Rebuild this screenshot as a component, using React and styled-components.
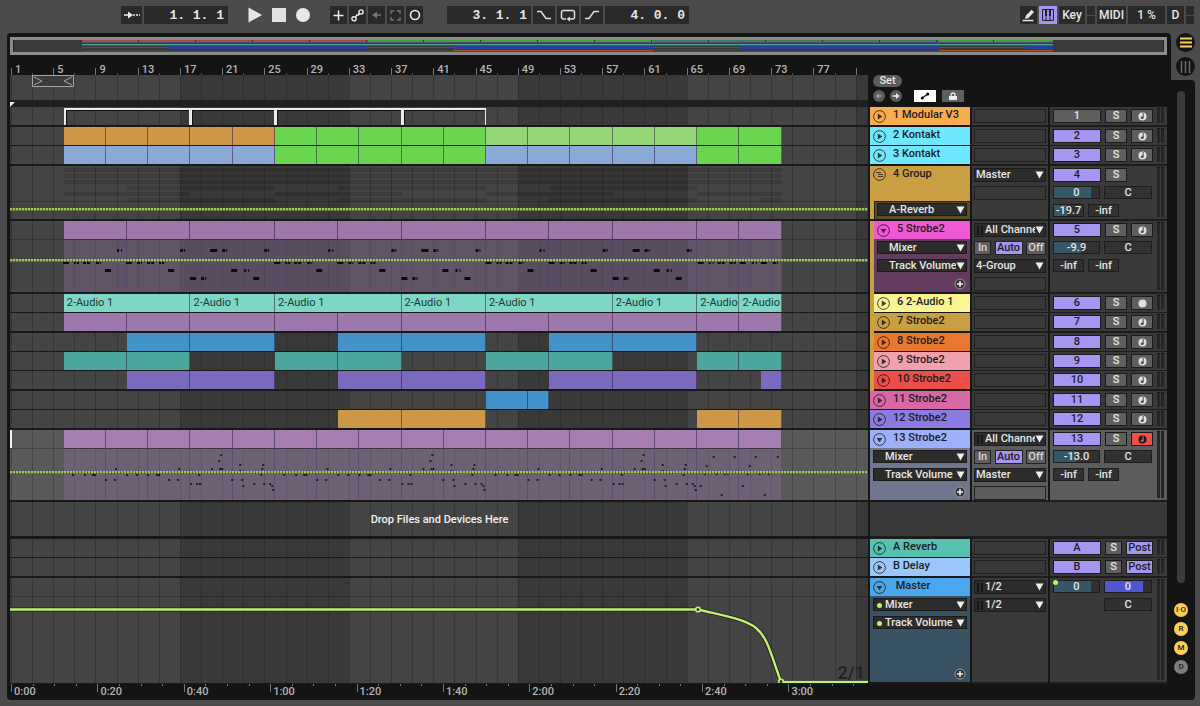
import React, { useState } from 'react';
import styled, { createGlobalStyle, css } from 'styled-components';

// width of n bars, relative to the visible part of the timeline
const bars = (n) => `${(n * 1.232).toFixed(3)}%`;

const COLORS = {
  orange: '#cd9748',
  green: '#69d551',
  lime: '#94d678',
  sky: '#8aaad5',
  purple: '#9d78ac',
  lilac: '#a47eb3',
  mint: '#7dd6c6',
  blue: '#4391c9',
  teal: '#4ba69b',
  violet: '#7b69bd',
  gold: '#c99f43',
  accent: '#a796f1',
  automation: '#bdf567',
};

const GlobalStyle = createGlobalStyle`
  * {
    box-sizing: border-box;
  }
  body {
    margin: 0;
    background: #4b4b4b;
    font-family: Roboto, "Liberation Sans", sans-serif;
    font-size: 11px;
    font-weight: 500;
    color: #e6e6e6;
  }
  button, input, select {
    font: inherit;
    color: inherit;
    margin: 0;
    padding: 0;
    border: 0;
    border-radius: 0;
  }
`;

const Page = styled.div`
  min-height: 100vh;
  display: flex;
  flex-direction: column;
  padding: 0 5px 6px 7px;
`;

/* ---------- toolbar ---------- */

const Toolbar = styled.header`
  display: flex;
  align-items: flex-start;
  height: 33px;
  padding: 6px 1px 0 114px;
`;

const ToolGroup = styled.div`
  display: flex;
  align-items: center;
  gap: 2px;
  margin-right: ${(props) => props.$after || 0}px;
  margin-left: ${(props) => (props.$end ? 'auto' : 0)};
`;

const ToolButton = styled.button`
  display: flex;
  align-items: center;
  justify-content: center;
  width: ${(props) => props.$w || 17}px;
  height: 18px;
  font-size: 12px;
  background: ${(props) => (props.$on ? COLORS.accent : '#2a2a2a')};
  color: ${(props) => (props.$on ? '#222' : '#e6e6e6')};
`;

const PlainButton = styled.button`
  display: flex;
  align-items: center;
  justify-content: center;
  width: 22px;
  height: 18px;
  background: transparent;
`;

const Position = styled.input`
  width: 84px;
  height: 18px;
  padding-right: 4px;
  background: #2a2a2a;
  text-align: right;
  font-family: "Liberation Mono", monospace;
  font-size: 13px;
  font-weight: 700;
`;

const Lights = styled.span`
  display: grid;
  grid-template-rows: 1fr 1fr;
  gap: 1px;
  width: 8px;
  height: 18px;

  i {
    background: #2a2a2a;
  }
`;

/* ---------- frame ---------- */

const Frame = styled.div`
  flex: 1;
  display: grid;
  grid-template-columns: minmax(0, 1fr) 24px;
`;

const Main = styled.main`
  padding: 4px 4px 0 3px;
  background: #141414;
  border-radius: 4px 4px 0 4px;
`;

const Side = styled.aside`
  display: flex;
  flex-direction: column;
`;

const ViewTabs = styled.div`
  display: flex;
  flex-direction: column;
  align-items: flex-end;
  gap: 5px;
  height: 47px;
`;

const ViewTab = styled.button`
  flex: none;
  display: flex;
  align-items: center;
  justify-content: center;
  width: 19px;
  height: 19px;
  border-radius: 50%;
  background: #141414;
`;

const SideBody = styled.div`
  flex: 1;
  display: flex;
  flex-direction: column;
  align-items: center;
  gap: 5px;
  padding: 11px 4px 26px 0;
  background: #141414;
  border-radius: 0 4px 4px 0;
`;

const ScrollThumb = styled.div`
  flex: 1;
  width: 8px;
  margin-bottom: 15px;
  border-radius: 4px;
  background: #3b3b3b;
`;

const RoundToggle = styled.button`
  width: 14px;
  height: 14px;
  border-radius: 50%;
  background: ${(props) => (props.$on ? '#fbcf57' : '#7d7d7d')};
  color: #222;
  font-size: 8px;
  line-height: 14px;
`;

const Overview = styled.div`
  height: 18px;
  border: 3px solid #8b8b8b;
  border-width: 3px 3px;
  background: #3a3a3a;

  svg {
    display: block;
    width: 100%;
    height: 12px;
  }
`;

/* ---------- rulers ---------- */

const columns = css`
  display: grid;
  grid-template-columns: minmax(0, 1fr) 100px 76px 117px;
  column-gap: 2px;
`;

const gridLines = css`
  padding-left: 1px;
  background-image:
    repeating-linear-gradient(90deg, rgba(0, 0, 0, 0.2) 0 1px, transparent 1px ${bars(2)}),
    repeating-linear-gradient(90deg, transparent 0 ${bars(16)}, rgba(0, 0, 0, 0.17) ${bars(16)} ${bars(32)});
  background-origin: content-box;
`;

const Head = styled.div`
  ${columns}
`;

const BarRuler = styled.div`
  display: flex;
  height: 20px;
  padding-left: 1px;
  overflow: hidden;
  background-image:
    repeating-linear-gradient(90deg, #777 0 1px, transparent 1px ${bars(4)}),
    repeating-linear-gradient(90deg, #555 0 1px, transparent 1px ${bars(2)});
  background-origin: content-box;
  background-clip: content-box;
  background-repeat: no-repeat;
  background-size: 100% 7px, 100% 2px;
  background-position: 0 100%;
`;

const BarLabel = styled.span`
  flex: 0 0 ${bars(4)};
  padding-left: 4px;
  line-height: 30px;
  color: #b4b4b4;
`;

const Scrub = styled.div`
  height: 25px;
  background-color: #444;
  ${gridLines}
`;

const Brace = styled.div`
  display: flex;
  justify-content: space-between;
  align-items: center;
  width: ${bars(4)};
  height: 12px;
  margin-left: ${bars(2)};
  border: 1px solid #a5a5a5;
  background: #3c3c3c;
`;

const CueBand = styled.div`
  height: 7px;
  background: #1f1f1f;

  svg {
    display: block;
  }
`;

const HeadTools = styled.div`
  display: flex;
  flex-direction: column;
  align-items: flex-start;
  gap: 3px;
  padding: 20px 0 0 3px;
`;

const SetButton = styled.button`
  width: 29px;
  height: 12px;
  border-radius: 6px;
  background: #5b5b5b;
  line-height: 12px;
`;

const HeadToolRow = styled.div`
  display: flex;
  align-items: center;
`;

const ArrowButton = styled.button`
  display: flex;
  width: 12px;
  height: 12px;
  margin-right: 5px;
  border-radius: 50%;
  background: #5b5b5b;
`;

const ModeButton = styled.button`
  display: flex;
  align-items: center;
  justify-content: center;
  width: 22px;
  height: 12px;
  margin: 0 0 0 ${(props) => (props.$first ? 7 : 6)}px;
  background: ${(props) => (props.$on ? '#fff' : '#5f5f5f')};
`;

const TimeRuler = styled.div`
  display: flex;
  height: 16px;
  padding-left: 1px;
  overflow: hidden;
  background-image:
    repeating-linear-gradient(90deg, #777 0 1px, transparent 1px 10.08%),
    repeating-linear-gradient(90deg, #777 0 1px, transparent 1px 2.52%);
  background-origin: content-box;
  background-clip: content-box;
  background-repeat: no-repeat;
  background-size: 100% 8px, 100% 2px;
`;

const TimeLabel = styled.span`
  flex: 0 0 10.08%;
  padding-left: 3px;
  line-height: 15px;
  color: #b4b4b4;
`;

/* ---------- rows ---------- */

const Row = styled.div`
  ${columns}
  height: ${(props) => props.$h}px;
  background: #171717;
`;

const Lane = styled.div`
  position: relative;
  display: flex;
  min-width: 0;
  overflow: hidden;
  border-bottom: ${(props) => props.$line || 2}px solid #191919;
  background-color: ${(props) => (props.$selected ? '#595959' : '#444')};
  ${gridLines}
  ${(props) => props.$selected && `
    background-image: repeating-linear-gradient(90deg, rgba(0, 0, 0, 0.2) 0 1px, transparent 1px ${bars(2)});
  `}
`;

const Space = styled.div`
  flex: 0 0 ${(props) => bars(props.$n)};
`;

const Clip = styled.div`
  flex: 0 0 ${(props) => bars(props.$n)};
  min-width: 0;
  overflow: hidden;
  white-space: nowrap;
  background: ${(props) => props.$color};
  border-right: 1px solid rgba(40, 20, 50, 0.5);
  color: #1d3a36;
  padding-left: 3px;
  font-weight: 400;
  line-height: 18px;
`;

const FrameClip = styled.div`
  flex: 0 0 ${(props) => bars(props.$n)};
  border: solid #ececec;
  border-width: 2px 1px 0 2px;
  margin-top: 1px;
  box-shadow: inset 1px 1px 0 #111;
`;

const TallClip = styled.div`
  flex: 0 0 ${(props) => bars(props.$n)};
  background: rgba(139, 112, 158, 0.38);
  border-right: 1px solid rgba(90, 60, 110, 0.55);

  &::before {
    content: "";
    display: block;
    height: 18px;
    background: ${(props) => props.$color};
    border-bottom: 1px solid #4c4052;
  }
`;

// lies over the clips of an unfolded lane
const Notes = styled.svg`
  position: absolute;
  top: 18px;
  left: ${bars(5)};
  width: ${bars(68)};
  height: 53px;
`;

const Dotted = styled.div`
  position: absolute;
  left: 0;
  right: 0;
  top: ${(props) => props.$top}px;
  height: 3px;
  background: repeating-linear-gradient(90deg, #a0c55e 0 2px, #55702f 2px 3px);
  border-bottom: 1px solid rgba(30, 40, 20, 0.4);
`;

const GroupLanes = styled.div`
  flex: 1;
  display: flex;
  flex-direction: column;
  gap: 1px;
  padding-top: 2px;
`;

const GroupLane = styled.div`
  display: flex;
  height: 5px;
  border-bottom: 1px solid transparent;
`;

const GroupClip = styled.div`
  flex: 0 0 ${(props) => bars(props.$n)};
  background: ${(props) => (props.$on ? 'rgba(0, 0, 0, 0.13)' : 'none')};
`;

const Fold = styled.div`
  position: absolute;
  left: 0;
  right: 0;
  top: ${(props) => props.$top}px;
  height: 1px;
  background: rgba(0, 0, 0, 0.2);
`;

const InsertMark = styled.div`
  position: absolute;
  left: 0;
  top: 0;
  width: 2px;
  height: 18px;
  background: #f2f2f2;
`;

const DropText = styled.p`
  flex: 1;
  margin: 0;
  text-align: center;
  line-height: 36px;
  color: #f2f2f2;
`;

const Curve = styled.svg`
  position: absolute;
  inset: 0;
  width: 100%;
  height: 100%;
`;

const ZoomLabel = styled.span`
  position: absolute;
  right: 3px;
  bottom: 0;
  font-size: 18px;
  line-height: 20px;
  color: #222;
`;

const HeadCell = styled.div`
  display: flex;
  min-width: 0;
`;

const GroupStrip = styled.div`
  width: 4px;
  background: ${COLORS.gold};
`;

const TrackHead = styled.div`
  flex: 1;
  min-width: 0;
  display: flex;
  flex-direction: column;
  background: ${(props) => props.$body};
  border-bottom: 2px solid #171717;
`;

const Title = styled.div`
  display: flex;
  align-items: center;
  gap: 7px;
  height: ${(props) => (props.$tall ? 35 : 18)}px;
  padding-left: 3px;
  background: ${(props) => props.$color};
  color: #1d1d1d;
  white-space: nowrap;
  ${(props) => props.$tall && 'align-items: flex-start; padding-top: 2px;'}
`;

const TitleText = styled.span`
  line-height: 12px;
  padding-bottom: 2px;
`;

const FoldButton = styled.button`
  flex: none;
  display: flex;
  width: 13px;
  height: 13px;
  background: none;
`;

const HeadBody = styled.div`
  flex: 1;
  position: relative;
  display: flex;
  flex-direction: column;
  gap: 5px;
  padding: 2px 3px 0;
`;

const GroupBody = styled.div`
  flex: 1;
  margin-left: 4px;
  padding: 1px 3px 0 2px;
  background: #5b4c29;
  border: 1px solid #2a2414;
  border-width: 1px 0 0 1px;
`;

const AddButton = styled.button`
  position: absolute;
  right: 4px;
  bottom: 2px;
  display: flex;
  width: 12px;
  height: 12px;
  background: none;
`;

const ChooserBox = styled.label`
  display: grid;
  align-items: center;
  height: ${(props) => (props.$io ? 14 : 13)}px;
  background: #2c2c2c;
  border: 1px solid #1c1c1c;

  > * {
    grid-area: 1 / 1;
  }
  > svg {
    pointer-events: none;
  }
  select {
    appearance: none;
    width: 100%;
    min-width: 0;
    height: 12px;
    padding: 0 10px 0 ${(props) => props.$indent}px;
    background: transparent;
    line-height: 12px;
    outline: none;
  }
`;

const Arrow = styled.svg`
  justify-self: end;
  margin-right: 1px;
`;

const Dot = styled.i`
  width: 5px;
  height: 5px;
  margin-left: 3px;
  border-radius: 50%;
  background: ${COLORS.automation};
`;

const MiniMeter = styled.i`
  width: 6px;
  height: 9px;
  margin-left: 2px;
  background: repeating-linear-gradient(90deg, #161616 0 2px, transparent 2px 4px);
`;

const IoCell = styled.div`
  display: flex;
  flex-direction: column;
  gap: 4px;
  padding: 2px 2px 0;
  background: ${(props) => (props.$selected ? '#5c5c5c' : '#393939')};
  border-bottom: 2px solid #1d1d1d;
`;

const Slot = styled.div`
  height: 14px;
  border: 1px solid #202020;
`;

const Monitor = styled.div`
  display: flex;
  justify-content: space-between;
  height: 14px;
`;

const MonitorButton = styled.button`
  width: ${(props) => props.$w}px;
  height: 14px;
  border: 1px solid #222;
  background: ${(props) => (props.$on ? COLORS.accent : '#5f5f5f')};
  color: ${(props) => (props.$on ? '#222' : '#d8d8d8')};
  line-height: 12px;
`;

const MixCell = styled.div`
  display: flex;
  justify-content: space-between;
  padding: 0 3px;
  background: ${(props) => (props.$selected ? '#5c5c5c' : '#393939')};
  border-bottom: 2px solid #1d1d1d;
`;

const MixRows = styled.div`
  display: flex;
  flex-direction: column;
  gap: 5px;
  padding-top: 2px;
`;

const MixRow = styled.div`
  display: flex;
  gap: 4px;
  height: 13px;
`;

const MixButton = styled.button`
  display: flex;
  align-items: center;
  justify-content: center;
  width: ${(props) => props.$w}px;
  height: 14px;
  border: 1px solid #1b1b1b;
  background: ${(props) => props.$bg || '#5f5f5f'};
  color: ${(props) => (props.$dark ? '#1f1f1f' : '#e6e6e6')};
  line-height: 12px;
`;

const Value = styled.input`
  width: ${(props) => props.$w}px;
  height: 13px;
  border: 1px solid #1e1e1e;
  text-align: center;
  outline: none;
  background: ${(props) => `linear-gradient(90deg, ${props.$fill || '#365866'} ${props.$level || 0}%, #313131 ${props.$level || 0}%)`};
`;

const ValueWrap = styled.div`
  position: relative;
  display: flex;
`;

const AutoDot = styled(Dot)`
  position: absolute;
  left: 0;
  top: 0;
  margin: 0;
`;

const MixGap = styled.div`
  width: ${(props) => props.$w}px;
`;

const Meter = styled.div`
  display: flex;
  gap: 1px;
  margin: 1px 0 2px;

  i {
    width: 3px;
    background: #262626;
    border-top: 1px solid #171717;
  }
`;

const DropArea = styled.div`
  grid-column: 2 / -1;
  background: #393939;
  border-bottom: 3px solid #1d1d1d;
`;

/* ---------- icons ---------- */

function PlayCircle() {
  return (
    <svg width="13" height="13" viewBox="0 0 13 13">
      <circle cx="6.5" cy="6.5" r="5.9" fill="none" stroke="#111" strokeOpacity=".75" />
      <path d="M4.8 3.6 9.4 6.5 4.8 9.4z" fill="#111" fillOpacity=".8" />
    </svg>
  );
}

function OpenCircle() {
  return (
    <svg width="13" height="13" viewBox="0 0 13 13">
      <circle cx="6.5" cy="6.5" r="5.9" fill="none" stroke="#111" strokeOpacity=".75" />
      <path d="M3.6 5 9.4 5 6.5 9.2z" fill="#111" fillOpacity=".8" />
    </svg>
  );
}

function GroupCircle() {
  return (
    <svg width="13" height="13" viewBox="0 0 13 13" fill="none" stroke="#111" strokeOpacity=".75">
      <circle cx="6.5" cy="6.5" r="5.9" />
      <path d="M3 4.5h5M5 6.5h5M5 8.5h5" />
    </svg>
  );
}

function ArmNote({ dark }) {
  return (
    <svg width="9" height="9" viewBox="0 0 9 9">
      <circle cx="4.5" cy="4.5" r="4" fill={dark ? '#1c1c1c' : '#e0e0e0'} />
      <path d="M5.2 1v4.6" stroke={dark ? '#ef4f44' : '#4a4a4a'} />
      <ellipse cx="4.2" cy="5.8" rx="1.5" ry="1.2" fill={dark ? '#ef4f44' : '#4a4a4a'} />
    </svg>
  );
}

function ArmDot() {
  return (
    <svg width="9" height="9" viewBox="0 0 9 9">
      <circle cx="4.5" cy="4.5" r="4" fill="#e0e0e0" />
    </svg>
  );
}

function PlusCircle() {
  return (
    <svg width="12" height="12" viewBox="0 0 12 12">
      <circle cx="6" cy="6" r="5" fill="#333" stroke="#9a9a9a" />
      <path d="M6 3v6M3 6h6" stroke="#eee" strokeWidth="1.6" />
    </svg>
  );
}

/* ---------- data ---------- */

const AUDIO = '2-Audio 1';

const fill = (n, size, color) => Array.from({ length: n }, () => [size, color]);
const gap = (n) => [n, null];

const STROBE_LENGTHS = [6, 6, 8, 6, 6, 8, 6, 6, 8, 4, 4];
const fullPattern = (color) => STROBE_LENGTHS.map((n) => [n, color]);
const latePattern = (color) => [
  gap(6), [6, color], [8, color],
  gap(6), [6, color], [8, color],
  gap(6), [6, color], [8, color],
];
const earlyPattern = (color) => [
  [6, color], [6, color], gap(8),
  [6, color], [6, color], gap(8),
  [6, color], [6, color], gap(8),
  [4, color], [4, color],
];

const TRACKS = [
  { no: '1', name: 'Modular V3', h: 20, color: '#f7ac50', off: true, arm: 'note', frames: [12, 8, 12, 8] },
  {
    no: '2', name: 'Kontakt', h: 19, color: '#6fe8ff', arm: 'note',
    clips: [...fill(5, 4, COLORS.orange), ...fill(5, 4, COLORS.green), ...fill(5, 4, COLORS.lime), ...fill(2, 4, COLORS.green)],
  },
  {
    no: '3', name: 'Kontakt', h: 20, color: '#6fe8ff', arm: 'note',
    clips: [...fill(5, 4, COLORS.sky), ...fill(5, 4, COLORS.green), ...fill(5, 4, COLORS.sky), ...fill(2, 4, COLORS.green)],
  },
  { no: '4', name: 'Group', h: 55, color: COLORS.gold, group: true, dotted: 42, output: 'Master', volume: '0', level: 83, sends: ['-19.7', '-inf'] },
  {
    no: '5', name: 'Strobe2', h: 73, color: '#ee58d2', body: '#643c60', child: true, open: true, arm: 'note', dotted: 38,
    tall: fullPattern(COLORS.purple), notes: 'strobe', output: '4-Group', volume: '-9.9', level: 60, sends: ['-inf', '-inf'],
  },
  {
    no: '6', name: AUDIO, h: 19, color: '#f9f593', child: true, arm: 'dot',
    clips: [
      ...[12, 8, 12, 8, 12, 8].map((n) => [n, COLORS.mint, AUDIO]),
      [4, COLORS.mint, '2-Audio'], [4, COLORS.mint, '2-Audio'],
    ],
  },
  { no: '7', name: 'Strobe2', h: 20, color: COLORS.gold, child: true, arm: 'note', clips: fullPattern(COLORS.purple) },
  { no: '8', name: 'Strobe2', h: 19, color: '#e87830', child: true, arm: 'note', clips: latePattern(COLORS.blue) },
  { no: '9', name: 'Strobe2', h: 19, color: '#f2a0ad', child: true, arm: 'note', clips: earlyPattern(COLORS.teal) },
  { no: '10', name: 'Strobe2', h: 20, color: '#ec4f49', child: true, arm: 'note', clips: [...latePattern(COLORS.violet), gap(6), [2, COLORS.violet]] },
  { no: '11', name: 'Strobe2', h: 19, color: '#d868a4', arm: 'note', clips: [gap(40), [4, COLORS.blue], [2, COLORS.blue]] },
  {
    no: '12', name: 'Strobe2', h: 20, color: '#8b7be0', arm: 'note',
    clips: [gap(26), [6, COLORS.orange], [8, COLORS.orange], gap(20), [4, COLORS.orange], [4, COLORS.orange]],
  },
  {
    no: '13', name: 'Strobe2', h: 72, color: '#9cb0fb', body: '#70768d', open: true, selected: true, arm: 'armed', dotted: 41,
    tall: fill(17, 4, COLORS.lilac), notes: 'dots', output: 'Master', volume: '-13.0', level: 50, sends: ['-inf', '-inf'],
  },
];

const RETURNS = [
  { no: 'A', name: 'Reverb', h: 19, color: '#58c1b2' },
  { no: 'B', name: 'Delay', h: 20, color: '#9cc7fb' },
];

// x, y, width inside one 20 bar section
const STROBE_NOTES = [
  [0, 22, 6], [11, 22, 2], [14, 22, 2], [20, 22, 3], [24, 22, 3], [33, 22, 3], [37, 22, 1],
  [42, 30, 6], [54, 10, 2], [58, 10, 1],
  [63, 22, 6], [74, 22, 3], [78, 22, 1], [84, 22, 3], [88, 22, 3], [96, 22, 2], [99, 22, 2],
  [105, 30, 6], [117, 10, 3], [121, 10, 1],
  [127, 38, 6], [138, 38, 3], [142, 38, 1], [147, 10, 7], [159, 10, 3], [163, 10, 1],
  [168, 30, 6], [181, 30, 2], [185, 30, 1], [190, 38, 6], [201, 10, 3], [205, 10, 1],
];

const STROBE_TAIL = [[0, 6], [11, 2], [15, 1], [20, 3], [24, 3], [32, 3], [36, 2], [42, 6], [54, 2], [58, 1], [63, 6], [75, 3], [79, 1]];

const DOTS = [
  [9, 26], [21, 26], [29, 26], [31, 26], [42, 31], [51, 31], [52, 20], [63, 26], [73, 26], [84, 26],
  [93, 26], [95, 26], [105, 31], [114, 31], [115, 20], [127, 35], [133, 35], [135, 26], [136, 35], [148, 20],
  [155, 12], [157, 6], [156, 20], [158, 20], [168, 31], [176, 16], [176, 22], [178, 31], [179, 37],
  [190, 35], [197, 26], [198, 20], [199, 16], [200, 35], [206, 35], [208, 37], [209, 41],
];

const DOT_TAIL = [
  [3, 37], [9, 17], [7, 25], [16, 8], [19, 25], [24, 46], [27, 25], [30, 25], [37, 8], [45, 37],
  [52, 17], [50, 25], [58, 8], [62, 25], [67, 46], [71, 25], [80, 8],
];

const BAR_LABELS = Array.from({ length: 20 }, (_, i) => 1 + i * 4);
const TIME_LABELS = ['0:00', '0:20', '0:40', '1:00', '1:20', '1:40', '2:00', '2:20', '2:40', '3:00'];

/* ---------- parts ---------- */

function Chooser({ name, value, indent, io, dot, meter }) {
  return (
    <ChooserBox $indent={indent} $io={io}>
      {dot && <Dot />}
      {meter && <MiniMeter />}
      <select aria-label={name} defaultValue={value}>
        <option>{value}</option>
      </select>
      <Arrow width="9" height="8" viewBox="0 0 9 8">
        <path d="M.5 .5h8L4.5 7.5z" fill="#f0f0f0" />
      </Arrow>
    </ChooserBox>
  );
}

function NoteLayer({ kind }) {
  return (
    <Notes viewBox="0 0 718 53" preserveAspectRatio="none">
      {[0, 211, 422].map((start) => (
        <g key={start} transform={`translate(${start} 0)`} fill="#0c0a0d">
          {kind === 'strobe'
            ? STROBE_NOTES.map(([x, y, w]) => <rect key={`${x}-${y}`} x={x} y={y} width={w} height="3" />)
            : DOTS.map(([x, y]) => <rect key={`${x}-${y}`} x={x} y={y} width="2" height="2" opacity=".75" />)}
        </g>
      ))}
      <g transform="translate(633 0)" fill="#0c0a0d">
        {kind === 'strobe'
          ? STROBE_TAIL.map(([x, w]) => <rect key={x} x={x + 1} y="22" width={w} height="3" />)
          : DOT_TAIL.map(([x, y]) => <rect key={`${x}-${y}`} x={x} y={y} width="2" height="2" opacity=".75" />)}
      </g>
    </Notes>
  );
}

function GroupOverview() {
  const full = [[68, true]];
  const lanes = [full, full, full, latePattern(true), earlyPattern(true), [...latePattern(true), gap(6), [2, true]]];
  return (
    <GroupLanes>
      {lanes.map((lane, i) => (
        <GroupLane key={i}>
          <Space $n={5} />
          {lane.map(([n, on], j) => <GroupClip key={j} $n={n} $on={on} />)}
        </GroupLane>
      ))}
    </GroupLanes>
  );
}

function TrackLane({ track }) {
  return (
    <Lane $selected={track.selected}>
      {track.group ? <GroupOverview /> : <Space $n={5} />}
      {track.frames && track.frames.map((n, i) => <FrameClip key={i} $n={n} />)}
      {track.clips && track.clips.map(([n, color, label], i) => (
        color ? <Clip key={i} $n={n} $color={color}>{label}</Clip> : <Space key={i} $n={n} />
      ))}
      {track.tall && track.tall.map(([n, color], i) => <TallClip key={i} $n={n} $color={color} />)}
      {track.notes && <NoteLayer kind={track.notes} />}
      {track.group && <Fold $top={35} />}
      {track.open && <Fold $top={18} />}
      {track.dotted && <Dotted $top={track.dotted} />}
      {track.selected && <InsertMark />}
    </Lane>
  );
}

function TrackHeader({ track }) {
  let icon = <PlayCircle />;
  if (track.open) icon = <OpenCircle />;
  if (track.group) icon = <GroupCircle />;

  return (
    <HeadCell>
      {track.child && <GroupStrip />}
      <TrackHead $body={track.body || track.color}>
        <Title $color={track.color} $tall={track.group}>
          <FoldButton aria-label={`Fold ${track.name}`}>{icon}</FoldButton>
          <TitleText>{track.no} {track.name}</TitleText>
        </Title>
        {track.group && (
          <GroupBody>
            <Chooser name="Automation" value="A-Reverb" indent={11} />
          </GroupBody>
        )}
        {track.open && (
          <HeadBody>
            <Chooser name="Device" value="Mixer" indent={11} />
            <Chooser name="Parameter" value="Track Volume" indent={11} />
            <AddButton aria-label="Add lane"><PlusCircle /></AddButton>
          </HeadBody>
        )}
      </TrackHead>
    </HeadCell>
  );
}

function TrackIo({ track }) {
  return (
    <IoCell $selected={track.selected}>
      {track.open && (
        <>
          <Chooser io name="Input channel" value="All Channels" indent={10} meter />
          <Monitor>
            <MonitorButton $w={17}>In</MonitorButton>
            <MonitorButton $w={28} $on>Auto</MonitorButton>
            <MonitorButton $w={20}>Off</MonitorButton>
          </Monitor>
        </>
      )}
      {track.output && <Chooser io name="Output" value={track.output} indent={1} />}
      <Slot />
    </IoCell>
  );
}

function Meters() {
  return <Meter><i /><i /></Meter>;
}

function TrackMixer({ track }) {
  const [active, setActive] = useState(!track.off);
  return (
    <MixCell $selected={track.selected}>
      <MixRows>
        <MixRow>
          <MixButton $w={48} $bg={active && COLORS.accent} $dark={active} onClick={() => setActive(!active)}>
            {track.no}
          </MixButton>
          <MixButton $w={22}>S</MixButton>
          {track.arm && (
            <MixButton $w={22} $bg={track.arm === 'armed' && '#ef4f44'} aria-label="Arm">
              {track.arm === 'dot' ? <ArmDot /> : <ArmNote dark={track.arm === 'armed'} />}
            </MixButton>
          )}
        </MixRow>
        {track.volume && (
          <>
            <MixRow>
              <Value $w={47} $level={track.level} aria-label="Volume" defaultValue={track.volume} />
              <Value $w={48} aria-label="Pan" defaultValue="C" />
            </MixRow>
            <MixRow>
              <Value $w={31} $level={track.group ? 45 : 0} aria-label="Send A" defaultValue={track.sends[0]} />
              <Value $w={31} aria-label="Send B" defaultValue={track.sends[1]} />
            </MixRow>
          </>
        )}
      </MixRows>
      <Meters />
    </MixCell>
  );
}

function MasterRow() {
  return (
    <Row $h={106}>
      <Lane $line={1}>
        <Fold $top={18} />
        <ZoomLabel>2/1</ZoomLabel>
        <Curve viewBox="0 0 858 105" preserveAspectRatio="none" fill="none">
          <path d="M0 31.5H688C715 38 735 41 746 50S760 73 771 104H858" stroke="#251633" strokeWidth="4" />
          <path d="M0 31.5H688C715 38 735 41 746 50S760 73 771 104H858" stroke={COLORS.automation} strokeWidth="2.4" />
          <circle cx="688" cy="31.5" r="2.3" fill="#333" stroke={COLORS.automation} strokeWidth="1.6" />
          <circle cx="771" cy="103.5" r="2.3" fill="#333" stroke={COLORS.automation} strokeWidth="1.6" />
        </Curve>
      </Lane>
      <HeadCell>
        <TrackHead $body="#3a5362">
          <Title $color="#4aa7eb">
            <FoldButton aria-label="Fold Master"><OpenCircle /></FoldButton>
            <TitleText>&nbsp;Master</TitleText>
          </Title>
          <HeadBody>
            <Chooser name="Device" value="Mixer" indent={11} dot />
            <Chooser name="Parameter" value="Track Volume" indent={11} dot />
            <AddButton aria-label="Add lane"><PlusCircle /></AddButton>
          </HeadBody>
        </TrackHead>
      </HeadCell>
      <IoCell>
        <Chooser io name="Cue out" value="1/2" indent={10} meter />
        <Chooser io name="Master out" value="1/2" indent={10} meter />
      </IoCell>
      <MixCell>
        <MixRows>
          <MixRow>
            <ValueWrap>
              <Value $w={47} $level={83} aria-label="Master volume" defaultValue="0" />
              <AutoDot />
            </ValueWrap>
            <Value $w={48} $level={83} $fill="#5255d4" aria-label="Cue volume" defaultValue="0" />
          </MixRow>
          <MixRow>
            <MixGap $w={47} />
            <Value $w={48} aria-label="Pan" defaultValue="C" />
          </MixRow>
        </MixRows>
        <Meters />
      </MixCell>
    </Row>
  );
}

function TopBar() {
  return (
    <Toolbar>
      <ToolGroup $after={16}>
        <ToolButton $w={21} aria-label="Follow">
          <svg width="17" height="10" viewBox="0 0 17 10">
            <path d="M1 5h6" stroke="#eee" strokeWidth="1.5" />
            <path d="M5 1.5 10 5 5 8.5z" fill="#eee" />
            <path d="M10 5h7" stroke="#eee" strokeWidth="1.5" strokeDasharray="2 1" />
          </svg>
        </ToolButton>
        <Position aria-label="Arrangement position" defaultValue="1. 1. 1" />
      </ToolGroup>
      <ToolGroup $after={16}>
        <PlainButton aria-label="Play">
          <svg width="16" height="16" viewBox="0 0 16 16"><path d="M1.5 .5 15 8 1.5 15.5z" fill="#e6e6e6" /></svg>
        </PlainButton>
        <PlainButton aria-label="Stop">
          <svg width="14" height="14"><rect width="14" height="14" fill="#e2e2e2" /></svg>
        </PlainButton>
        <PlainButton aria-label="Record">
          <svg width="14" height="14"><circle cx="7" cy="7" r="7" fill="#e8e8e8" /></svg>
        </PlainButton>
      </ToolGroup>
      <ToolGroup $after={24}>
        <ToolButton aria-label="Overdub">
          <svg width="11" height="11"><path d="M5.5 .5v10M.5 5.5h10" stroke="#eee" strokeWidth="1.5" /></svg>
        </ToolButton>
        <ToolButton aria-label="Automation arm">
          <svg width="13" height="13" viewBox="0 0 13 13" fill="none" stroke="#eee" strokeWidth="1.4">
            <circle cx="3" cy="9.8" r="2.1" />
            <circle cx="10" cy="3" r="2.1" />
            <path d="M4.5 8.3 5.8 6 7.5 6 8.5 4.5" />
          </svg>
        </ToolButton>
        <ToolButton aria-label="Re-enable automation">
          <svg width="11" height="10" viewBox="0 0 11 10"><path d="M4 5h6" stroke="#777" strokeWidth="1.5" /><path d="M6 1.5 1 5 6 8.5z" fill="#777" /></svg>
        </ToolButton>
        <ToolButton aria-label="Capture MIDI">
          <svg width="11" height="11" viewBox="0 0 11 11" fill="none" stroke="#777" strokeWidth="1.3">
            <path d="M1 4V1h3M7 1h3v3M10 7v3H7M4 10H1V7" />
          </svg>
        </ToolButton>
        <ToolButton aria-label="Session record">
          <svg width="12" height="12"><circle cx="6" cy="6" r="4.5" fill="none" stroke="#eee" strokeWidth="1.6" /></svg>
        </ToolButton>
      </ToolGroup>
      <ToolGroup>
        <Position aria-label="Loop start" defaultValue="3. 1. 1" />
        <ToolButton $w={22} aria-label="Punch in">
          <svg width="16" height="10" fill="none"><path d="M1 1.5h4l5 7h5" stroke="#ddd" strokeWidth="1.5" /></svg>
        </ToolButton>
        <ToolButton $w={22} aria-label="Loop">
          <svg width="16" height="13" viewBox="0 0 16 13" fill="none" stroke="#ddd" strokeWidth="1.5">
            <path d="M6 10H3.5Q1.500 10 1.500 8V3.500Q1.500 1.500 3.500 1.500H12.500Q14.500 1.500 14.500 3.500V8Q14.500 10 12.500 10H9" />
            <path d="M10 7.5v5L6.5 10z" fill="#ddd" stroke="none" />
          </svg>
        </ToolButton>
        <ToolButton $w={22} aria-label="Punch out">
          <svg width="16" height="10" fill="none"><path d="M1 8.5h4l5-7h5" stroke="#ddd" strokeWidth="1.5" /></svg>
        </ToolButton>
        <Position aria-label="Loop length" defaultValue="4. 0. 0" />
      </ToolGroup>
      <ToolGroup $end>
        <ToolButton aria-label="Draw mode">
          <svg width="13" height="13" viewBox="0 0 13 13">
            <path d="M9.5 .8 12 3 6.5 9 3 10l.8-3.3z" fill="#e6e6e6" />
            <path d="M.5 11.5h11" stroke="#e6e6e6" strokeWidth="1.5" />
          </svg>
        </ToolButton>
        <ToolButton $w={18} $on aria-label="Computer MIDI keyboard">
          <svg width="12" height="12" viewBox="0 0 12 12" fill="none" stroke="#222">
            <path d="M.5 .5h11v11H.5zM4 7v4.5M8 7v4.5" />
            <path d="M4 1v6M8 1v6" strokeWidth="2" />
          </svg>
        </ToolButton>
        <ToolButton $w={26}>Key</ToolButton>
        <Lights><i /><i /></Lights>
        <ToolButton $w={29}>MIDI</ToolButton>
        <ToolButton $w={37}>1 %</ToolButton>
        <ToolButton $w={17}>D</ToolButton>
        <Lights><i /><i /></Lights>
      </ToolGroup>
    </Toolbar>
  );
}

function SongOverview() {
  const line = (x1, x2, y, color, h = 1) => <rect key={`${x1}-${y}`} x={x1} y={y} width={x2 - x1} height={h} fill={color} />;
  return (
    <Overview>
      <svg viewBox="13 0 1151 12" preserveAspectRatio="none">
        {line(82, 368, 0, '#a04f3c', 2)}
        {line(368, 653, 0, '#46a02c', 2)}
        {line(653, 939, 0, '#48785c', 2)}
        {line(939, 1053, 0, '#46a02c', 2)}
        {line(82, 1053, 2, '#4c4c78')}
        {line(82, 1053, 4, '#53a48e')}
        {line(82, 1053, 5, '#5a4664')}
        {[82, 368, 653, 939].map((x, i) => line(x, [253, 539, 825, 1053][i], 7, '#2f6259'))}
        {[168, 453, 740, 1025].map((x, i) => line(x, [368, 653, 940, 1053][i], 6, '#2a3f9a', 3))}
        {line(653, 740, 9, '#28496a')}
        {line(453, 653, 10, '#a4521f')}
        {line(939, 1053, 10, '#a4521f')}
        {line(82, 1053, 11, '#55405f')}
        {Array.from({ length: 16 }, (_, i) => line(138 + i * 57, 139 + i * 57, 0, '#333', 2))}
        <path d="M13.5 0v12M1163.5 0v12" stroke="#222" />
      </svg>
    </Overview>
  );
}

function App() {
  return (
    <>
      <GlobalStyle />
      <Page>
        <TopBar />
        <Frame>
          <Main>
            <SongOverview />
            <Head>
              <div>
                <BarRuler>
                  {BAR_LABELS.map((n) => <BarLabel key={n}>{n}</BarLabel>)}
                </BarRuler>
                <Scrub>
                  <Brace>
                    <svg width="11" height="10" fill="none"><path d="M1 1 9 5 1 9" stroke="#a5a5a5" /></svg>
                    <svg width="11" height="10" fill="none"><path d="M10 1 2 5 10 9" stroke="#a5a5a5" /></svg>
                  </Brace>
                </Scrub>
                <CueBand>
                  <svg width="6" height="7"><path d="M0 2h5L0 7z" fill="#eee" /></svg>
                </CueBand>
              </div>
              <HeadTools>
                <SetButton>Set</SetButton>
                <HeadToolRow>
                  <ArrowButton aria-label="Previous locator">
                    <svg width="12" height="12"><path d="M9 6H4" stroke="#999" strokeWidth="1.5" /><path d="M6 3 2.5 6 6 9z" fill="#999" /></svg>
                  </ArrowButton>
                  <ArrowButton aria-label="Next locator">
                    <svg width="12" height="12"><path d="M2.5 6H8" stroke="#eee" strokeWidth="1.5" /><path d="M6 3 9.5 6 6 9z" fill="#eee" /></svg>
                  </ArrowButton>
                  <ModeButton $on $first aria-label="Automation mode">
                    <svg width="10" height="8"><path d="M2 6 8 2" stroke="#111" strokeWidth="1.3" /><circle cx="2.3" cy="6" r="1.5" /><circle cx="7.7" cy="2" r="1.5" /></svg>
                  </ModeButton>
                  <ModeButton aria-label="Lock envelopes">
                    <svg width="8" height="9"><rect y="4" width="8" height="4" fill="#eee" /><path d="M2 4V3a2 2 0 0 1 4 0v1" fill="none" stroke="#eee" strokeWidth="1.3" /></svg>
                  </ModeButton>
                </HeadToolRow>
              </HeadTools>
            </Head>

            {TRACKS.map((track) => (
              <Row key={track.no} $h={track.h}>
                <TrackLane track={track} />
                <TrackHeader track={track} />
                <TrackIo track={track} />
                <TrackMixer track={track} />
              </Row>
            ))}

            <Row $h={37}>
              <Lane $line={3}>
                <DropText>Drop Files and Devices Here</DropText>
              </Lane>
              <DropArea />
            </Row>

            {RETURNS.map((track) => (
              <Row key={track.no} $h={track.h}>
                <Lane />
                <TrackHeader track={track} />
                <TrackIo track={track} />
                <MixCell>
                  <MixRows>
                    <MixRow>
                      <MixButton $w={48} $bg={COLORS.accent} $dark>{track.no}</MixButton>
                      <MixButton $w={17}>S</MixButton>
                      <MixButton $w={27} $bg={COLORS.accent} $dark>Post</MixButton>
                    </MixRow>
                  </MixRows>
                  <Meters />
                </MixCell>
              </Row>
            ))}

            <MasterRow />

            <Head>
              <TimeRuler>
                {TIME_LABELS.map((t) => <TimeLabel key={t}>{t}</TimeLabel>)}
              </TimeRuler>
            </Head>
          </Main>

          <Side>
            <ViewTabs>
              <ViewTab aria-label="Arrangement view">
                <svg width="12" height="11"><path d="M0 1.5h12M0 5.5h12M0 9.5h12" stroke="#fbcf57" strokeWidth="2" /></svg>
              </ViewTab>
              <ViewTab aria-label="Session view">
                <svg width="11" height="12"><path d="M1.5 0v12M5.5 0v12M9.5 0v12" stroke="#6a6a6a" strokeWidth="1.5" /></svg>
              </ViewTab>
            </ViewTabs>
            <SideBody>
              <ScrollThumb />
              <RoundToggle $on>I·O</RoundToggle>
              <RoundToggle $on>R</RoundToggle>
              <RoundToggle $on>M</RoundToggle>
              <RoundToggle>D</RoundToggle>
            </SideBody>
          </Side>
        </Frame>
      </Page>
    </>
  );
}

export default App;
